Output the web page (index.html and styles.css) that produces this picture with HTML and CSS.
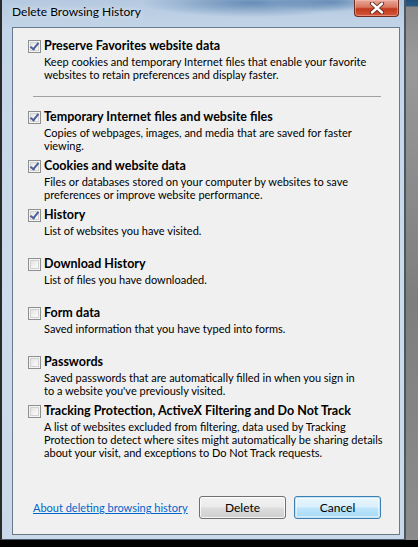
FILE: index.html
```html
<!DOCTYPE html>
<html>
<head>
<meta charset="utf-8">
<link rel="stylesheet" href="styles.css">
</head>
<body>
<div class="screen">
  <div class="window">
    <div class="titlebar">
      <span class="title">Delete Browsing History</span>
      <div class="close"><svg width="16" height="12" viewBox="0 0 16 12"><path d="M3 1.5 L13 10.5 M13 1.5 L3 10.5" stroke="#5a2418" stroke-width="4.2" stroke-linecap="round"/><path d="M3 1.5 L13 10.5 M13 1.5 L3 10.5" stroke="#ffffff" stroke-width="2.4" stroke-linecap="round"/></svg></div>
    </div>
    <div class="panel">
      <div class="first">
        <div class="head"><span class="cb on"></span><span class="label">Preserve Favorites website data</span></div>
        <div class="desc">Keep cookies and temporary Internet files that enable your favorite<br>websites to retain preferences and display faster.</div>
      </div>
      <div class="sep"></div>
      <div class="item">
        <div class="head"><span class="cb on"></span><span class="label">Temporary Internet files and website files</span></div>
        <div class="desc">Copies of webpages, images, and media that are saved for faster<br>viewing.</div>
      </div>
      <div class="item">
        <div class="head"><span class="cb on"></span><span class="label">Cookies and website data</span></div>
        <div class="desc">Files or databases stored on your computer by websites to save<br>preferences or improve website performance.</div>
      </div>
      <div class="item">
        <div class="head"><span class="cb on"></span><span class="label">History</span></div>
        <div class="desc">List of websites you have visited.</div>
      </div>
      <div class="item">
        <div class="head"><span class="cb"></span><span class="label">Download History</span></div>
        <div class="desc">List of files you have downloaded.</div>
      </div>
      <div class="item">
        <div class="head"><span class="cb"></span><span class="label">Form data</span></div>
        <div class="desc">Saved information that you have typed into forms.</div>
      </div>
      <div class="item">
        <div class="head"><span class="cb"></span><span class="label">Passwords</span></div>
        <div class="desc">Saved passwords that are automatically filled in when you sign in<br>to a website you've previously visited.</div>
      </div>
      <div class="item last">
        <div class="head"><span class="cb"></span><span class="label">Tracking Protection, ActiveX Filtering and Do Not Track</span></div>
        <div class="desc">A list of websites excluded from filtering, data used by Tracking<br>Protection to detect where sites might automatically be sharing details<br>about your visit, and exceptions to Do Not Track requests.</div>
      </div>
      <div class="footer">
        <a class="link" href="#">About deleting browsing history</a>
        <div class="buttons">
          <button class="btn">Delete</button>
          <button class="btn focus">Cancel</button>
        </div>
      </div>
    </div>
  </div>
  <div class="side"></div>
</div>
</body>
</html>
```

FILE: styles.css
```css
html, body {
  margin: 0;
  padding: 0;
  background: #000;
}
.screen {
  width: 418px;
  height: 547px;
  display: flex;
  background: #000;
  overflow: hidden;
  font-family: "Lato", "Noto Sans", sans-serif;
  font-size: 11px;
  color: #000;
}
.window {
  width: 405px;
  height: 540px;
  box-sizing: border-box;
  border-left: 2px solid #2a2a2a;
  border-right: 1px solid #4a5866;
  border-bottom: 1px solid #4a5866;
  background:
    radial-gradient(ellipse 110px 14px at 250px 3px, rgba(50,100,155,0.6), rgba(50,100,155,0) 100%),
    radial-gradient(ellipse 60px 10px at 330px 2px, rgba(50,100,155,0.5), rgba(50,100,155,0) 100%),
    linear-gradient(to bottom, #b4c9e0 0px, #c3d5e8 30px, #cddcec 300px, #c9d9ea 540px);
  display: flex;
  flex-direction: column;
  padding: 0 4px 4px 10px;
}
.titlebar {
  height: 27px;
  display: flex;
  align-items: flex-start;
  justify-content: space-between;
  flex-shrink: 0;
}
.title {
  padding-top: 4px;
  font-size: 12px;
  color: #000;
  text-shadow: 0 0 6px rgba(255,255,255,0.9);
}
.close {
  width: 45px;
  height: 17px;
  box-sizing: border-box;
  border: 1px solid #6e2e22;
  border-top: none;
  border-radius: 0 0 4px 4px;
  background: linear-gradient(to bottom, #e9a99a 0%, #d8765e 45%, #c1381c 55%, #d4583a 100%);
  box-shadow: inset 0 0 0 1px rgba(255,200,190,0.45);
  display: flex;
  align-items: center;
  justify-content: center;
  margin-right: 1px;
}
.panel {
  flex: 1;
  background: #f0f0f0;
  border: 1px solid #6a7888;
  display: flex;
  flex-direction: column;
  padding: 10px 18px 0 15px;
}
.head {
  display: flex;
  align-items: center;
  height: 16px;
}
.cb {
  width: 13px;
  height: 13px;
  box-sizing: border-box;
  border: 1px solid #8e8f8f;
  background: linear-gradient(135deg, #dcdcdc 0%, #f4f4f4 60%, #ffffff 100%);
  box-shadow: inset 0 0 0 1px #f4f4f4, inset 0 0 0 2px #d2d2d2;
  margin-right: 3px;
  position: relative;
  flex-shrink: 0;
}
.cb.on::after {
  content: "";
  position: absolute;
  left: 3px;
  top: 0px;
  width: 3px;
  height: 7px;
  border-right: 2px solid #4c5f9a;
  border-bottom: 2px solid #4c5f9a;
  transform: rotate(38deg);
}
.label {
  font-weight: bold;
  font-size: 12.5px;
  line-height: 16px;
  white-space: nowrap;
}
.desc {
  margin-left: 16px;
  margin-top: 1px;
  line-height: 13px;
  white-space: nowrap;
}
.first {
  height: 58px;
}
.sep {
  height: 1px;
  background: #a0a0a0;
  margin: 0 0 12px 5px;
}
.item {
  height: 49px;
}
.item.last {
  height: auto;
}
.footer {
  margin-top: auto;
  margin-bottom: 15px;
  display: flex;
  align-items: center;
  justify-content: space-between;
  padding-left: 5px;
}
.link {
  color: #0066cc;
  text-decoration: underline;
  white-space: nowrap;
  font-size: 11px;
}
.buttons {
  display: flex;
  gap: 8px;
}
.btn {
  width: 87px;
  height: 23px;
  box-sizing: border-box;
  font-family: "Lato", "Noto Sans", sans-serif;
  font-size: 12px;
  color: #000;
  border: 1px solid #707070;
  border-radius: 3px;
  background: linear-gradient(to bottom, #f2f2f2 0%, #ebebeb 48%, #dddddd 52%, #cfcfcf 100%);
  box-shadow: inset 0 0 0 1px rgba(255,255,255,0.8);
  padding: 0;
}
.btn.focus {
  border-color: #3c7fb1;
  background: linear-gradient(to bottom, #eaf6fd 0%, #d9f0fc 48%, #bee6fd 52%, #a7d9f5 100%);
  box-shadow: inset 0 0 0 1px #c4e4f6, inset 0 0 0 2px rgba(255,255,255,0.5);
}
.side {
  flex: 1;
  height: 540px;
  background: linear-gradient(to bottom, #1f4f7a 0px, #2c5a84 6px, #8a8a8a 7px, #9a9a9a 60px, #7e7e7e 300px, #8c8c8c 540px);
  border-left: 1px solid #555;
}
```
